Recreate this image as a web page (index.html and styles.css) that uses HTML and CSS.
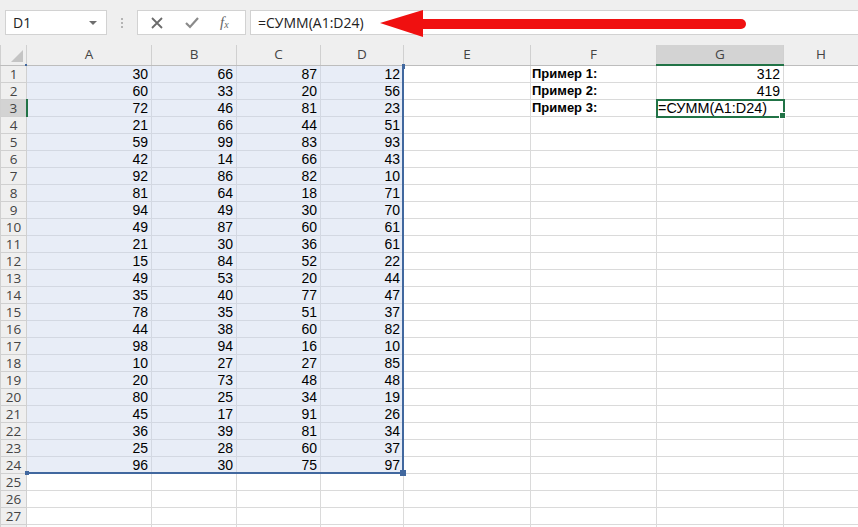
FILE: index.html
```html
<!DOCTYPE html>
<html>
<head>
<meta charset="utf-8">
<link rel="stylesheet" href="styles.css">
</head>
<body>
<div class="toolbar">
  <div class="namebox"><span>D1</span><span class="dd"></span></div>
  <div class="grip"><i></i><i></i><i></i></div>
  <div class="fxbox">
    <svg class="ico x" width="14" height="14" viewBox="0 0 14 14"><path d="M2 2 L12 12 M12 2 L2 12" stroke="#6b6b6b" stroke-width="1.8" fill="none"/></svg>
    <svg class="ico ok" width="16" height="14" viewBox="0 0 16 14"><path d="M2 7 L6 11 L14 2" stroke="#8a8a8a" stroke-width="2.2" fill="none"/></svg>
    <span class="fx">f<sub>x</sub></span>
  </div>
  <div class="formula">=СУММ(A1:D24)</div>
  <svg class="arrow" width="380" height="34" viewBox="0 0 380 34"><line x1="40" y1="15" x2="361" y2="15" stroke="#f01010" stroke-width="10" stroke-linecap="round"/><polygon points="0,14 43,1 43,28" fill="#f01010"/></svg>
</div>
<div class="sheet">
<table class="grid">
<colgroup><col class="c0"><col class="ca"><col class="cb"><col class="cc"><col class="cd"><col class="ce"><col class="cf"><col class="cg"><col class="ch"></colgroup>
<tr class="hdr"><th class="corner"><span class="tri"></span></th><th>A</th><th>B</th><th>C</th><th>D</th><th>E</th><th>F</th><th class="hsel">G</th><th>H</th></tr>
<tr><th>1</th><td class="s">30</td><td class="s">66</td><td class="s">87</td><td class="s">12</td><td></td><td class="lbl">Пример 1:</td><td>312</td><td></td></tr>
<tr><th>2</th><td class="s">60</td><td class="s">33</td><td class="s">20</td><td class="s">56</td><td></td><td class="lbl">Пример 2:</td><td>419</td><td></td></tr>
<tr><th class="rsel">3</th><td class="s">72</td><td class="s">46</td><td class="s">81</td><td class="s">23</td><td></td><td class="lbl">Пример 3:</td><td class="active">=СУММ(A1:D24)<span class="fh"></span></td><td></td></tr>
<tr><th>4</th><td class="s">21</td><td class="s">66</td><td class="s">44</td><td class="s">51</td><td></td><td></td><td></td><td></td></tr>
<tr><th>5</th><td class="s">59</td><td class="s">99</td><td class="s">83</td><td class="s">93</td><td></td><td></td><td></td><td></td></tr>
<tr><th>6</th><td class="s">42</td><td class="s">14</td><td class="s">66</td><td class="s">43</td><td></td><td></td><td></td><td></td></tr>
<tr><th>7</th><td class="s">92</td><td class="s">86</td><td class="s">82</td><td class="s">10</td><td></td><td></td><td></td><td></td></tr>
<tr><th>8</th><td class="s">81</td><td class="s">64</td><td class="s">18</td><td class="s">71</td><td></td><td></td><td></td><td></td></tr>
<tr><th>9</th><td class="s">94</td><td class="s">49</td><td class="s">30</td><td class="s">70</td><td></td><td></td><td></td><td></td></tr>
<tr><th>10</th><td class="s">49</td><td class="s">87</td><td class="s">60</td><td class="s">61</td><td></td><td></td><td></td><td></td></tr>
<tr><th>11</th><td class="s">21</td><td class="s">30</td><td class="s">36</td><td class="s">61</td><td></td><td></td><td></td><td></td></tr>
<tr><th>12</th><td class="s">15</td><td class="s">84</td><td class="s">52</td><td class="s">22</td><td></td><td></td><td></td><td></td></tr>
<tr><th>13</th><td class="s">49</td><td class="s">53</td><td class="s">20</td><td class="s">44</td><td></td><td></td><td></td><td></td></tr>
<tr><th>14</th><td class="s">35</td><td class="s">40</td><td class="s">77</td><td class="s">47</td><td></td><td></td><td></td><td></td></tr>
<tr><th>15</th><td class="s">78</td><td class="s">35</td><td class="s">51</td><td class="s">37</td><td></td><td></td><td></td><td></td></tr>
<tr><th>16</th><td class="s">44</td><td class="s">38</td><td class="s">60</td><td class="s">82</td><td></td><td></td><td></td><td></td></tr>
<tr><th>17</th><td class="s">98</td><td class="s">94</td><td class="s">16</td><td class="s">10</td><td></td><td></td><td></td><td></td></tr>
<tr><th>18</th><td class="s">10</td><td class="s">27</td><td class="s">27</td><td class="s">85</td><td></td><td></td><td></td><td></td></tr>
<tr><th>19</th><td class="s">20</td><td class="s">73</td><td class="s">48</td><td class="s">48</td><td></td><td></td><td></td><td></td></tr>
<tr><th>20</th><td class="s">80</td><td class="s">25</td><td class="s">34</td><td class="s">19</td><td></td><td></td><td></td><td></td></tr>
<tr><th>21</th><td class="s">45</td><td class="s">17</td><td class="s">91</td><td class="s">26</td><td></td><td></td><td></td><td></td></tr>
<tr><th>22</th><td class="s">36</td><td class="s">39</td><td class="s">81</td><td class="s">34</td><td></td><td></td><td></td><td></td></tr>
<tr><th>23</th><td class="s">25</td><td class="s">28</td><td class="s">60</td><td class="s">37</td><td></td><td></td><td></td><td></td></tr>
<tr><th>24</th><td class="s">96</td><td class="s">30</td><td class="s">75</td><td class="s">97</td><td></td><td></td><td></td><td></td></tr>
<tr><th>25</th><td></td><td></td><td></td><td></td><td></td><td></td><td></td><td></td></tr>
<tr><th>26</th><td></td><td></td><td></td><td></td><td></td><td></td><td></td><td></td></tr>
<tr><th>27</th><td></td><td></td><td></td><td></td><td></td><td></td><td></td><td></td></tr>
<tr><th></th><td></td><td></td><td></td><td></td><td></td><td></td><td></td><td></td></tr>
</table>
<div class="range"><span class="h tl"></span><span class="h tr"></span><span class="h bl"></span><span class="h br"></span></div>
</div>
</body>
</html>
```
FILE: styles.css
```css
html, body { margin: 0; padding: 0; }
body {
  width: 858px; height: 527px; overflow: hidden; background: #fff;
  font-family: "Liberation Sans", Arial, sans-serif; color: #000;
}
.toolbar {
  position: relative; height: 45px; box-sizing: border-box; padding-top: 10px;
  background: #efefef; display: flex; align-items: flex-start;
}
.namebox {
  margin-left: 5px; width: 102px; height: 25px; box-sizing: border-box;
  border: 1px solid #d2d2d2; background: #fff; display: flex; align-items: center;
  justify-content: space-between; padding: 0 7px 0 7px; font-size: 14px; color: #222;
  font-family: "Open Sans", "Liberation Sans", sans-serif;
}
.dd { width: 0; height: 0; border-left: 4px solid transparent; border-right: 4px solid transparent; border-top: 4px solid #6e6e6e; margin-right: 2px; }
.grip { width: 30px; height: 25px; display: flex; flex-direction: column; align-items: center; justify-content: center; gap: 2px; }
.grip i { display: block; width: 2px; height: 2px; background: #b4b4b4; }
.fxbox {
  width: 109px; height: 25px; box-sizing: border-box; border: 1px solid #d2d2d2; background: #fff;
  display: flex; align-items: center; padding: 0 0 0 12px;
}
.ok { margin-left: 20px; }
.fx { margin-left: 20px; font-family: "Liberation Serif", serif; font-style: italic; font-size: 15px; color: #666; line-height: 1; }
.fx sub { font-size: 10px; vertical-align: -1px; }
.formula {
  margin-left: 4px; flex: 1; height: 25px; box-sizing: border-box; border: 1px solid #d2d2d2; border-right: none;
  background: #fff; font-size: 14px; line-height: 23px; padding-left: 7px; color: #222;
  font-family: "Open Sans", "Liberation Sans", sans-serif;
}
.arrow { position: absolute; left: 380px; top: 9px; }

.sheet { position: relative; }
.grid { border-collapse: collapse; table-layout: fixed; width: 858px; }
.c0 { width: 26px; } .ca { width: 125px; } .cb { width: 85px; } .cc { width: 84px; } .cd { width: 83px; }
.ce { width: 127px; } .cf { width: 126px; } .cg { width: 127px; } .ch { width: 75px; }
.grid td, .grid th { padding: 0; height: 16px; line-height: 16px; white-space: nowrap; overflow: hidden; }
.grid td {
  border: 1px solid #dadada; font-size: 14px; text-align: right; padding: 0 3px;
}
.grid th {
  background: #efefef; font-weight: normal; font-size: 13.5px; color: #444;
  border: 1px solid #d0d0d0; text-align: center;
  font-family: "Open Sans", "Liberation Sans", sans-serif;
}
.grid .hdr th { height: 19px; line-height: 19px; border-top: none; border-bottom: 1px solid #bdbdbd; }
.grid .hdr th.hsel { background: #d3d3d3; border-bottom: 2px solid #217346; }
.grid th.rsel { background: #d3d3d3; border-right: 2px solid #217346; }
.corner { position: relative; }
.tri { position: absolute; right: 3px; bottom: 3px; width: 0; height: 0; border-left: 12px solid transparent; border-bottom: 12px solid #c4c4c4; }
.grid td.s { background: #e8edf7; border-color: #d3d8e2; }
.grid td.lbl { text-align: left; font-weight: bold; font-size: 13px; padding-left: 1px; }
.grid td.active {
  position: relative; text-align: left; outline: 2px solid #217346; outline-offset: -1px; padding-left: 1px; overflow: visible;
  font-size: 14.4px;
}
.fh { position: absolute; right: -3px; bottom: -3px; width: 5px; height: 5px; background: #217346; border: 1px solid #fff; }
.range {
  position: absolute; left: 26px; top: 20px; width: 376px; height: 407px;
  border-right: 2px solid #41689f; border-bottom: 2px solid #41689f; pointer-events: none;
}
.h { position: absolute; width: 4px; height: 4px; background: #41689f; }
.tl { left: -1px; top: -1px; width: 2px; height: 2px; }
.tr { right: -3px; top: -1px; width: 3px; height: 5px; }
.bl { left: -1px; bottom: -3px; }
.br { right: -4px; bottom: -4px; width: 6px; height: 6px; }
```
